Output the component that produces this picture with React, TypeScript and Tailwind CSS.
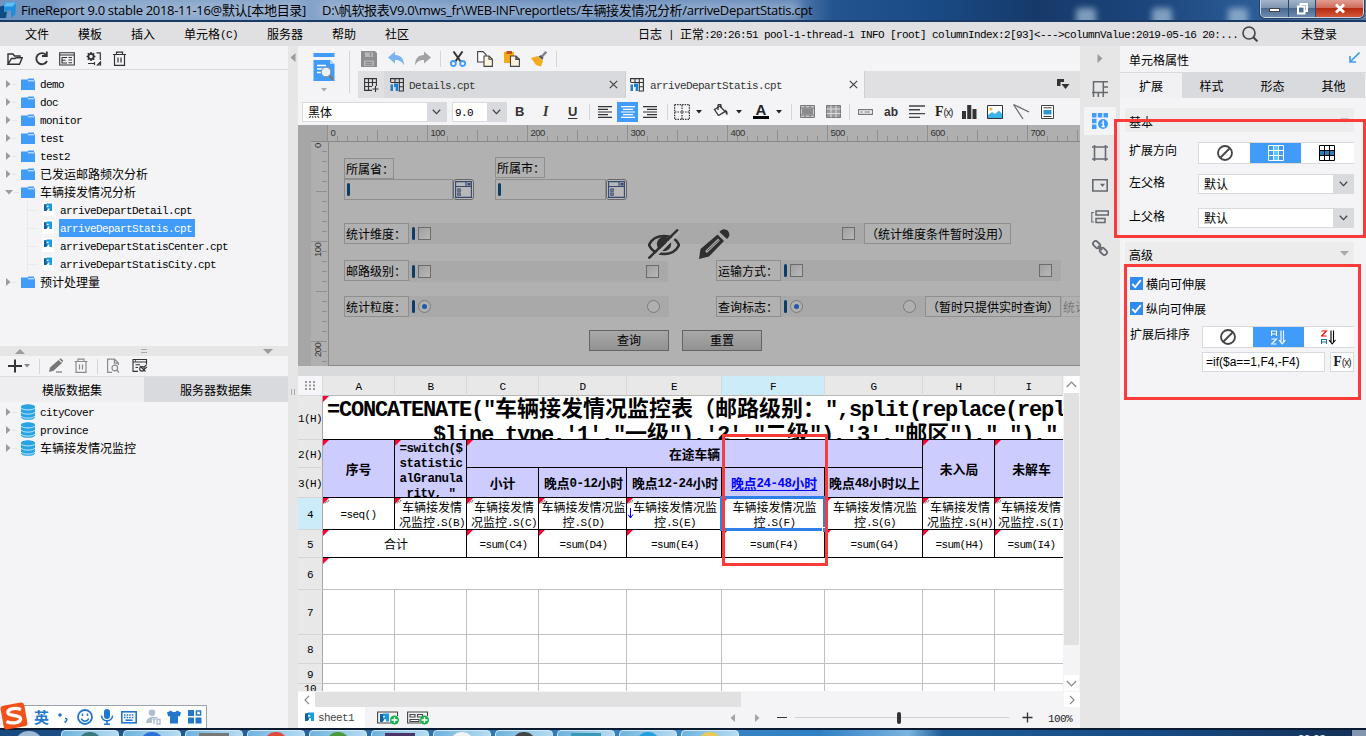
import React from "react";

const SANS = "font-['Liberation_Sans','Noto_Sans_CJK_SC',sans-serif]";

/* Mixed text: CJK glyphs are a full em wide, Latin ones half of that. */
function T({ s, size = "n" }: { s: string; size?: "n" | "b" | "h" }) {
  const latin =
    size === "n"
      ? "text-[11px] tracking-[-0.6px] align-[0.6px]"
      : size === "b"
        ? "text-[12.5px] font-bold tracking-[-0.5px] align-[0.6px]"
        : "text-[22px] font-bold tracking-[-1.2px]";
  const cjk =
    size === "n" ? "text-[12px]" : size === "b" ? "text-[12.8px] font-bold" : "text-[22px] font-bold";
  return (
    <span className={cjk + " whitespace-pre"}>
      {s.split(/([\u0020-\u00ff]+)/).map((p, i) =>
        i % 2 ? (
          <span key={i} className={latin + " font-['Liberation_Mono',monospace] leading-none"}>
            {p}
          </span>
        ) : (
          p
        )
      )}
    </span>
  );
}

type IcProps = { w?: number; h?: number; children: React.ReactNode; className?: string; c?: string; sw?: number };
function Ic({ w = 16, h = 16, children, className = "", c = "#333", sw = 1.4 }: IcProps) {
  return (
    <svg width={w} height={h} viewBox={`0 0 ${w} ${h}`} fill="none" stroke={c} strokeWidth={sw} className={"shrink-0 " + className}>
      {children}
    </svg>
  );
}

const Sep = ({ className = "" }) => <div className={"w-px shrink-0 bg-[#d5d5d8] " + className} />;

const Chevron = () => (
  <Ic w={9} h={6} c="#444" sw={1.3}>
    <path d="M0.8 0.8L4.5 4.6L8.2 0.8" />
  </Ic>
);

const Caret = ({ className = "", fill = "#222" }) => (
  <Ic w={6} h={4} c="none" className={className}>
    <path d="M0 0H6L3 3.6z" fill={fill} />
  </Ic>
);

/* ---------- title and menu ---------- */
function TitleBar() {
  return (
    <div className="relative flex h-[22px] shrink-0 items-center overflow-hidden border-b-2 border-[#1a3a66] bg-[linear-gradient(90deg,#6f93bf_0%,#7f9fc8_10%,#85a3c8_24%,#5f86b6_40%,#6a8dbb_52%,#5a80b0_58%,#23548f_61%,#1a4b86_68%,#16396a_76%,#1c467c_84%,#2c5c96_92%,#5f7fa8_100%)]">
      <div className="absolute left-[60px] top-[2px] h-4 w-[240px] bg-[#b4c6de] opacity-50 blur-[5px]" />
      <div className="absolute left-[320px] top-[2px] h-4 w-[480px] bg-[#a9bedb] opacity-60 blur-[5px]" />
      <div className="absolute left-[1076px] top-[8px] h-5 w-5 rounded bg-[#a8c4dc] opacity-70 blur-[3px]" />
      <div className="absolute left-[1152px] top-[8px] h-5 w-5 rounded bg-[#a8c4dc] opacity-70 blur-[3px]" />
      <div className="absolute left-[1228px] top-[8px] h-5 w-5 rounded bg-[#a8c4dc] opacity-70 blur-[3px]" />
      <Ic w={17} h={16} c="none" className="relative">
        <path d="M0 4.5L4 3.5V10L7 9.5L6 16H0z" fill="#0d4d86" />
        <path d="M4 3.5L6 0.5H16L15.5 12L11 16V8L4 10z" fill="#1f8fdc" />
        <path d="M6 0.5H16L12.5 4.5H4z" fill="#5cc0f2" />
      </Ic>
      <div className="relative ml-1 flex whitespace-pre font-['Open_Sans','Noto_Sans_CJK_SC',sans-serif] text-[13px] leading-[20px] text-black">
        <div className="w-[301px] tracking-[-0.3px]">FineReport 9.0 stable 2018-11-16@默认[本地目录]</div>
        <div className="tracking-[-0.3px]">D:\帆软报表V9.0\mws_fr\WEB-INF\reportlets/车辆接发情况分析/arriveDepartStatis.cpt</div>
      </div>
      <div className="absolute right-[2px] top-[-2px] flex h-[20px] w-[104px] overflow-hidden rounded-b-[5px] border border-[#c9d6e6] shadow-[0_0_0_1px_#27405f]">
        <div className="flex w-[28px] items-center justify-center border-r border-[#2c4769] bg-[linear-gradient(#a9b9cd_0%,#7d93b0_50%,#4a688e_51%,#6e8aae_100%)]">
          <div className="mt-1 h-[4px] w-[11px] border border-[#444] bg-white" />
        </div>
        <div className="flex w-[27px] items-center justify-center border-r border-[#2c4769] bg-[linear-gradient(#a9b9cd_0%,#7d93b0_50%,#4a688e_51%,#6e8aae_100%)]">
          <Ic w={13} h={13} c="#fff" sw={2}>
            <path d="M4.5 4V2H11V9H9" />
            <path d="M2 4.5H8.5V11.5H2z" />
          </Ic>
        </div>
        <div className="flex flex-1 items-center justify-center bg-[linear-gradient(#e3a397_0%,#cf6a58_50%,#b5290f_51%,#d4583c_100%)]">
          <Ic w={12} h={11} c="#fff" sw={2.8}>
            <path d="M2 1.5L10 9.5M10 1.5L2 9.5" />
          </Ic>
        </div>
      </div>
    </div>
  );
}

function MenuBar() {
  return (
    <div className="flex h-[24px] shrink-0 items-center bg-[#e0e0e2]">
      <div className="flex w-[638px] shrink-0 gap-[29px] pl-[25px]">
        {["文件", "模板", "插入", "单元格(C)", "服务器", "帮助", "社区"].map((m) => (
          <T key={m} s={m} />
        ))}
      </div>
      <div className="w-[604px] shrink-0">
        <T s={"日志 | 正常:20:26:51 pool-1-thread-1 INFO [root] columnIndex:2[93]<--->columnValue:2019-05-16 20:..."} />
      </div>
      <Ic w={16} h={16} sw={1.6} c="#444">
        <circle cx="7" cy="7" r="6" />
        <path d="M11.3 11.3L15.4 15.4" strokeWidth="2" />
      </Ic>
      <div className="ml-[43px]">
        <T s="未登录" />
      </div>
    </div>
  );
}

/* ---------- left column ---------- */
const Folder = () => (
  <Ic w={14} h={12} c="none">
    <path d="M0 1.5H6.5L7.5 0.5H13V2H14V12H0z" fill="#419bf9" />
    <path d="M7 2.8H13.5" stroke="#e8f2fd" strokeWidth="1" />
  </Ic>
);

const Db = () => (
  <Ic w={14} h={16} c="none">
    <path d="M0 3C0 -0.6 14 -0.6 14 3V13C14 16.8 0 16.8 0 13z" fill="#29a3e2" />
    <path d="M0 3.8C1 6.6 13 6.6 14 3.8M0 8C1 10.8 13 10.8 14 8M0 12C1 14.8 13 14.8 14 12" stroke="#d4edf9" strokeWidth="0.9" />
  </Ic>
);

const CptLogo = ({ w = 9, h = 9 }) => (
  <svg width={w} height={h} viewBox="0 0 9 9" className="shrink-0">
    <path d="M0 1.5L3 1V5.5H4V7.5L2.5 9H0z" fill="#0f62a6" />
    <path d="M3 0.5H9V9H6V6.2H3.5L3 4.4H5.2V3H3z" fill="#1a9ce2" />
  </svg>
);

function Branch({ name, open, icon }: { name: string; open?: boolean; icon: React.ReactNode }) {
  return (
    <div className="flex h-[18px] items-center">
      <div className="flex w-[21px] items-center pl-[5px]">
        {open ? (
          <Ic w={8} h={5} c="none">
            <path d="M0 0H8L4 4.5z" fill="#9b9b9b" />
          </Ic>
        ) : (
          <Ic w={6} h={8} c="none">
            <path d="M1 0V8L5.5 4z" fill="#9b9b9b" />
          </Ic>
        )}
        <div className="ml-px h-px w-[5px] bg-[#e6e6e8]" />
      </div>
      <div className="flex w-[19px]">{icon}</div>
      <div className="leading-[18px]">
        <T s={name} />
      </div>
    </div>
  );
}

function Leaf({ name, active }: { name: string; active?: boolean }) {
  return (
    <div className="flex h-[18px] items-center">
      <div className="ml-[27px] h-[18px] w-px bg-[#eaeaec]" />
      <div className="mr-[4px] h-px w-[10px] bg-[#eaeaec]" />
      <div className="mb-[2px] flex h-[14px] w-[12px] items-start justify-center bg-white pt-px">
        <CptLogo w={8} h={8} />
      </div>
      <div className={active ? "ml-[5px] flex h-[18px] items-center bg-[#419bf9] pl-px pr-[3px] text-white" : "ml-[6px]"}>
        <T s={name} />
      </div>
    </div>
  );
}

function LeftColumn() {
  return (
    <div className="flex w-[288px] shrink-0 flex-col bg-[#f4f4f6]">
      <div className="flex h-[24px] shrink-0 items-center border-b border-[#d9d9dc] pl-[7px] pt-[3px]">
        <Ic>
          <path d="M1 13V3H6L7.5 5H13V7.5M1 13.2L4.5 7.5H8L9 6.8H15.2L12.5 13.2z" />
        </Ic>
        <Ic className="ml-[11px]" sw={1.8}>
          <path d="M12 3.8A5.6 5.6 0 1 0 13 10" />
          <path d="M12.8 0.5V5H8" />
        </Ic>
        <Ic className="ml-[9px]">
          <path d="M0.7 1.7H15.3V14H0.7zM0.7 4H15.3M3 6.5H8M3 6.5V12H8M3 9.2H6.5M9.5 6.5H13M9.5 9H13M9.5 11.8H13" strokeWidth="1.1" />
        </Ic>
        <Ic className="ml-[11px]">
          <circle cx="5" cy="5.5" r="2.6" strokeWidth="1.8" />
          <path d="M5 1V3M5 8V10M0.6 5.5H2.5M7.6 5.5H9.4M1.8 2.3L3.2 3.7M6.9 7.3L8.2 8.7M8.2 2.3L6.9 3.7M3.2 7.3L1.8 8.7" strokeWidth="1.6" />
          <path d="M10.5 1.8H14.3V9M2 12.5H8.5M8.5 11V14M11.5 14H14.5V11zM14.5 11L11.5 14" strokeWidth="1.2" />
        </Ic>
        <Ic className="ml-[9px]">
          <path d="M2 3.5H15M5.5 3.3V1.2H11.5V3.3M3.5 3.5V14.3H13.5V3.5M7 6.5V11.5M10 6.5V11.5" strokeWidth="1.2" />
        </Ic>
      </div>
      <div className="h-[276px] shrink-0 pt-[5px]">
        {["demo", "doc", "monitor", "test", "test2", "已发运邮路频次分析"].map((n) => (
          <Branch key={n} name={n} icon={<Folder />} />
        ))}
        <Branch name="车辆接发情况分析" open icon={<Folder />} />
        <Leaf name="arriveDepartDetail.cpt" />
        <Leaf name="arriveDepartStatis.cpt" active />
        <Leaf name="arriveDepartStatisCenter.cpt" />
        <Leaf name="arriveDepartStatisCity.cpt" />
        <Branch name="预计处理量" icon={<Folder />} />
      </div>
      <div className="flex h-[10px] shrink-0 items-center justify-between bg-[#e6e6e6] pl-[15px] pr-[15px]">
        <Ic w={10} h={5} c="none">
          <path d="M0 5H10L5 0z" fill="#9b9b9b" />
        </Ic>
        <div className="h-[4px] w-[6px] border-y border-[#aaa]" />
        <Ic w={10} h={5} c="none">
          <path d="M0 0H10L5 5z" fill="#9b9b9b" />
        </Ic>
      </div>
      <div className="flex h-[21px] shrink-0 items-center border-b border-[#dedee0] pl-[7px]">
        <Ic sw={2}>
          <path d="M8 1.5V14.5M1 8H15" />
        </Ic>
        <Caret className="ml-px" fill="#888" />
        <Sep className="ml-[9px] h-[15px]" />
        <Ic className="ml-[8px]" c="none">
          <path d="M1 14L2 9.5L10.5 2L14 5L5.5 12.8zM11.3 1.3L12.6 0.2L15.3 2.8L14.6 4.3z" fill="#777" />
          <path d="M8 14H14" stroke="#888" />
        </Ic>
        <Ic className="ml-[9px]" c="#8a8a8a" sw={1.2}>
          <path d="M1.5 3.5H14.5M5 3.3V1.2H11V3.3M3 3.5V14.3H13V3.5M6.5 6.5V11.5M9.5 6.5V11.5" />
        </Ic>
        <Sep className="ml-[8px] h-[15px]" />
        <Ic className="ml-[8px]" c="#8a8a8a" sw={1.2}>
          <path d="M6 14.4H1.6V1.2H8.5L12.4 5V7M8.4 1.2V5.2H12.4" />
          <circle cx="8.8" cy="10" r="2.8" />
          <path d="M11 12.2L13 14.5" />
        </Ic>
        <Ic className="ml-[10px]" sw={1.1}>
          <path d="M6 13.4H1V1.5H14.5V6.5M1 4H14.5M3 2.8H4M3.5 6.8H8M3.5 9.5H6" />
          <circle cx="10" cy="10.8" r="2.3" />
          <path d="M8.2 8L13.5 13.5M12 9L14.5 6.8M12.5 11L15 8.8" />
        </Ic>
      </div>
      <div className="flex h-[25px] shrink-0 text-center leading-[25px]">
        <div className="flex-1 bg-[#eeeef0]">
          <T s="模版数据集" />
        </div>
        <div className="flex-1 bg-[#d9dadd]">
          <T s="服务器数据集" />
        </div>
      </div>
      <div className="pt-[1px]">
        {["cityCover", "province", "车辆接发情况监控"].map((n) => (
          <Branch key={n} name={n} icon={<Db />} />
        ))}
      </div>
    </div>
  );
}

/* ---------- centre toolbars ---------- */
function PreviewButton() {
  return (
    <div className="flex w-[60px] shrink-0 items-center">
      <div className="flex w-[51px] flex-col items-center">
        <Ic w={22} h={29} c="none">
          <path d="M0.5 0H21.5V4H0.5z" fill="#419bf9" />
          <path d="M0.5 7H17L21.5 11V28H0.5z" fill="#419bf9" />
          <path d="M17 7V11H21.5z" fill="#a9d1fc" />
          <path d="M4 12.5H13M4 16H9M4 19.5H8" stroke="#fff" strokeWidth="1.4" />
          <path d="M16 22.5L20 26.5" stroke="#777" strokeWidth="2.4" />
          <circle cx="13" cy="19" r="4.8" fill="#e9f3fe" stroke="#8a8f96" strokeWidth="1" />
        </Ic>
        <Caret className="mt-[6px]" fill="#aaa" />
      </div>
      <Sep className="h-[42px]" />
    </div>
  );
}

function QuickBar() {
  return (
    <div className="flex h-[25px] shrink-0 items-center gap-[11px] pl-[3px]">
      <Ic c="none">
        <path d="M0 0H14L16 2V16H0z" fill="#8d8d8f" />
        <path d="M4 1.5H12V6H4zM3 9.5H13V15H3z" fill="#b8b8ba" />
        <path d="M9.5 2V5.5M4.5 11.5H11.5M4.5 13.5H11.5" stroke="#8d8d8f" />
      </Ic>
      <Ic c="none">
        <path d="M0 6.5L7 0.5V4C13 4 16 8 16 14.5C14 10.5 11.5 9 7 9V12.5z" fill="#7ab3ef" />
      </Ic>
      <Ic c="none">
        <path d="M16 6.5L9 0.5V4C3 4 0 8 0 14.5C2 10.5 4.5 9 9 9V12.5z" fill="#a2a2a4" />
      </Ic>
      <div className="-mx-[2px] flex">
        <Sep className="h-[16px]" />
      </div>
      <Ic>
        <path d="M3.5 0.5L11 11M12.5 0.5L5 11" strokeWidth="2" />
        <circle cx="3.3" cy="12.5" r="2.5" stroke="#419bf9" strokeWidth="1.8" />
        <circle cx="12.7" cy="12.5" r="2.5" stroke="#419bf9" strokeWidth="1.8" />
      </Ic>
      <Ic c="#444" sw={1.1}>
        <path d="M0.6 0.6H6L9 3.5V11H0.6z" fill="#fff" />
        <path d="M7 5H12L15.4 8.3V15.4H7z" fill="#fdf5e0" />
        <path d="M12 5V8.3H15.4" />
      </Ic>
      <Ic c="none">
        <path d="M0 1H10V12H0z" fill="#f3ab1c" />
        <path d="M2.5 0H8V3H2.5z" fill="#c8501c" />
        <path d="M6.5 5H12L15.4 8.3V15.4H6.5z" fill="#fdf5e0" stroke="#444" strokeWidth="1.1" />
        <path d="M12 5V8.3H15.4" stroke="#444" />
      </Ic>
      <Ic c="none">
        <path d="M0 7L7 5L12 10L10 15.5L5 14z" fill="#f5ac1a" />
        <path d="M7.5 5.5L10 4L12.5 6.5L11.5 9z" fill="#555b66" />
        <path d="M11 5.5L15.3 0.8" stroke="#7b8494" strokeWidth="2.4" />
      </Ic>
      <div className="-ml-[2px] flex">
        <Sep className="h-[16px]" />
      </div>
    </div>
  );
}

const CptTabIcon = () => (
  <Ic w={14} h={14} c="#333" sw={1.1}>
    <path d="M0.6 4V0.6H13.4V13H8.5M0.6 4.5H13.4M5 0.6V4.5M9.3 0.6V13M9.3 8.7H13.4" />
    <path d="M0.5 6.5H3V13H0.5zM4 5.5H8V13H5.7V9H4z" fill="#1a7fd0" stroke="none" />
  </Ic>
);

const Cross = () => (
  <Ic w={9} h={9} c="#444" sw={1.2}>
    <path d="M0.8 0.8L8.2 8.2M8.2 0.8L0.8 8.2" />
  </Ic>
);

function FileTabs() {
  return (
    <div className="flex h-[27px] shrink-0 bg-[#e0e0e2]">
      <div className="flex w-[26px] items-center pl-[6px]">
        <Ic w={15} h={14} sw={1.1}>
          <path d="M8 12.4H0.6V0.6H12.4V8M0.6 4.5H12.4M0.6 8.5H8M4.5 0.6V12.4M8.5 0.6V8M11.5 8V14M8.5 11H14.5" />
        </Ic>
      </div>
      <div className="flex w-[241px] items-center bg-[#d9dadd] pl-[6px] pr-[7px] text-[#333]">
        <CptTabIcon />
        <div className="ml-[5px] flex-1">
          <T s="Details.cpt" />
        </div>
        <Cross />
      </div>
      <div className="flex w-[240px] items-center border-x border-[#cfcfd2] bg-[#f4f4f6] pl-[4px] pr-[6px] text-[#333]">
        <CptTabIcon />
        <div className="ml-[6px] flex-1">
          <T s="arriveDepartStatis.cpt" />
        </div>
        <Cross />
      </div>
      <div className="flex flex-1 items-center justify-end pr-[10px]">
        <Ic w={13} h={11} c="none">
          <path d="M0 0H7V3H3.5V7H0z" fill="#333" />
          <path d="M4.5 5H12.5L8.5 10z" fill="#333" />
        </Ic>
      </div>
    </div>
  );
}

const Lines = ({ d, c = "#333" }: { d: string; c?: string }) => (
  <Ic w={16} h={12} c={c} sw={1.2}>
    <path d={d} />
  </Ic>
);

function Fx({ className = "" }) {
  return (
    <span className={"whitespace-nowrap font-['Liberation_Serif',serif] text-[14px] leading-none text-[#222] " + className}>
      <b>F</b>
      <span className="font-['Liberation_Sans',sans-serif] text-[10px] tracking-[-0.9px]">(x)</span>
    </span>
  );
}

function FormatBar() {
  return (
    <div className="flex h-[27px] shrink-0 items-center bg-[#f4f4f6] pl-[4px]">
      <div className="flex h-[20px] w-[145px] shrink-0 items-center border border-[#d9dadd] bg-white">
        <div className="flex-1 pl-[5px] leading-[18px]">
          <T s="黑体" />
        </div>
        <div className="flex h-[18px] w-[19px] items-center justify-center bg-[#d9dadd]">
          <Chevron />
        </div>
      </div>
      <div className="ml-[5px] flex h-[20px] w-[55px] shrink-0 items-center border border-[#d9dadd] bg-white">
        <div className="flex-1 pl-[2px] leading-[18px]">
          <T s="9.0" />
        </div>
        <div className="flex h-[18px] w-[19px] items-center justify-center bg-[#d9dadd]">
          <Chevron />
        </div>
      </div>
      <div className={"flex shrink-0 text-[13px] leading-none text-[#333] " + SANS}>
        <b className="ml-[8px] w-[27px]">B</b>
        <i className="w-[26px] pl-[1px] font-['Liberation_Serif',serif] text-[14px] font-bold leading-[13px]">I</i>
        <b className="w-[21px] underline underline-offset-2">U</b>
      </div>
      <Sep className="h-[16px]" />
      <div className="ml-[8px] flex">
        <Lines d="M0 0.6H14M0 3.3H10M0 6H14M0 8.7H10M0 11.4H14" />
      </div>
      <div className="ml-[3px] flex h-[20px] w-[21px] shrink-0 items-center justify-center bg-[#419bf9]">
        <Lines c="#fff" d="M1 0.6H15M3 3.3H13M1 6H15M3 8.7H13M1 11.4H15" />
      </div>
      <div className="ml-[4px] flex">
        <Lines d="M1 0.6H15M5 3.3H15M1 6H15M5 8.7H15M1 11.4H15" />
      </div>
      <Sep className="ml-[9px] h-[16px]" />
      <Ic w={16} h={16} className="ml-[6px]" sw={1.2}>
        <path d="M0.6 0.6H15.4V15.4H0.6zM8 1V15M1 8H15" strokeDasharray="1.5 1" />
      </Ic>
      <Caret className="ml-[6px]" />
      <div className="ml-[11px] flex w-[16px] shrink-0 flex-col">
        <Ic w={16} h={12} sw={1.3}>
          <path d="M1.5 5.5L7 2L12 7.5L5.5 11.5z" />
          <path d="M5 6V1.5C5 0 8 0 8 1.5V4" />
          <path d="M12 5.5C15 7 14.5 9 14.5 11C13 10.5 12.2 9 12 5.5z" fill="#333" stroke="none" />
        </Ic>
        <div className="h-[4px] bg-white" />
      </div>
      <Caret className="ml-[7px]" />
      <div className={"ml-[11px] flex w-[16px] shrink-0 flex-col items-center text-[15px] font-bold leading-[12px] text-[#222] " + SANS}>
        A
        <div className="h-[3px] w-[16px] bg-black" />
      </div>
      <Caret className="ml-[7px]" />
      <Sep className="ml-[9px] h-[16px]" />
      <Ic w={15} h={13} className="ml-[8px]" c="#777" sw={1}>
        <path d="M0.5 0.5H14.5V12.5H0.5z" fill="#c9c9cb" />
        <path d="M0.5 3H14.5M0.5 10H14.5M5 0.5V3M10 0.5V3M5 10V12.5M10 10V12.5" />
        <path d="M2 3.5H13V9.5H2z" fill="#8a8a8c" stroke="none" />
      </Ic>
      <Ic w={15} h={13} className="ml-[11px]" c="#777" sw={1}>
        <path d="M0.5 0.5H14.5V12.5H0.5z" fill="#9b9b9d" />
        <path d="M0.5 4H14.5M0.5 8.5H14.5M5 0.5V12.5M10 0.5V12.5" stroke="#dcdcde" />
      </Ic>
      <Sep className="ml-[8px] h-[16px]" />
      <Ic w={15} h={6} className="ml-[8px]" c="#777" sw={1.1}>
        <path d="M0.6 0.6H14.4V5.4H0.6zM2.5 3H5M6.5 3H12" />
      </Ic>
      <b className={"ml-[11px] w-[25px] shrink-0 text-[12px] leading-none text-[#333] " + SANS}>ab</b>
      <Ic w={16} h={14} c="#444" sw={1.4}>
        <path d="M0 1H16M0 4.8H11M0 8.6H16M0 12.4H11" />
      </Ic>
      <Fx className="ml-[10px] w-[27px] shrink-0" />
      <Ic w={15} h={14} c="none">
        <path d="M0 6H4V14H0zM5.2 0H9.3V14H5.2zM10.5 4H14.5V14H10.5z" fill="#333" />
      </Ic>
      <Ic w={16} h={14} className="ml-[10px]" c="#333" sw={1}>
        <path d="M0.5 0.5H15.5V13.5H0.5z" fill="#fff" />
        <path d="M1 13V10L5 7L8 9L12 5.5L15 9V13z" fill="#3db3ec" stroke="none" />
        <circle cx="4" cy="4" r="1.6" fill="#f8b62c" stroke="none" />
      </Ic>
      <Ic w={17} h={16} className="ml-[10px]" c="#666" sw={1.2}>
        <path d="M0.5 0.5L16 8M0.5 0.5L10 15" />
      </Ic>
      <Ic w={13} h={14} className="ml-[11px]" c="#444" sw={1}>
        <path d="M0.5 0.5H12.5V13.5H0.5z" fill="#fff" />
        <path d="M2.5 2.8H10.5M2.5 11.5H10.5" />
        <path d="M2.5 5H10.5V9.5H2.5z" fill="#2c95d8" stroke="none" />
      </Ic>
    </div>
  );
}

/* ---------- parameter pane ---------- */
const range = (n: number) => Array.from({ length: n }, (_, i) => i);

function ParamPane() {
  return (
    <div className="flex h-[241px] shrink-0 flex-col bg-[#a6a6a6]">
      <svg width="782" height="17" className="shrink-0 font-['Liberation_Sans',sans-serif]">
        <rect x="30" width="752" height="17" fill="#afafaf" />
        {range(76).map((i) => (
          <path key={i} d={`M${29.5 + i * 10} ${i % 10 === 0 ? 0 : i % 5 === 0 ? 5 : 11}V16`} stroke="#8f8f8f" />
        ))}
        {range(8).map((i) => (
          <text key={i} x={32.5 + i * 100} y={10.5} fontSize="9.5" letterSpacing="-0.5" fill="#333">
            {i * 100}
          </text>
        ))}
        <path d="M13 16.5H782" stroke="#888" />
      </svg>
      <div className="flex flex-1">
        <svg width="30" height="224" className="shrink-0 font-['Liberation_Sans',sans-serif]">
          <rect x="13" width="17" height="224" fill="#afafaf" />
          {range(23).map((i) => (
            <path key={i} d={`M${i % 10 === 0 ? 13 : i % 5 === 0 ? 18 : 24} ${i * 10 - 0.5}H29`} stroke="#8f8f8f" />
          ))}
          <text transform="translate(22.5 6) rotate(-90)" fontSize="9.5" letterSpacing="-0.5" fill="#333">0</text>
          <text transform="translate(22.5 115) rotate(-90)" fontSize="9.5" letterSpacing="-0.5" fill="#333">100</text>
          <text transform="translate(22.5 215) rotate(-90)" fontSize="9.5" letterSpacing="-0.5" fill="#333">200</text>
        </svg>
        <FormCanvas />
      </div>
    </div>
  );
}

const at = (x: number, y: number, w: number, h: number) => ({ left: x - 329, top: y - 142, width: w, height: h });

const Label = ({ x, y, w, s, faint }: { x: number; y: number; w: number; s: string; faint?: boolean }) => (
  <div
    className={
      "absolute flex items-center overflow-hidden border pl-px leading-[18px] " +
      (faint ? "border-[#a3a3a3] text-[#777]" : "border-[#8e8e8e] bg-[#b1b1b1]")
    }
    style={at(x, y, w, 21)}
  >
    <T s={s} />
  </div>
);
const Strip = ({ x, y, w }: { x: number; y: number; w: number }) => (
  <div className="absolute bg-[#a9a9a9]" style={at(x, y, w, 21)} />
);
const Mark = ({ x, y }: { x: number; y: number }) => (
  <div className="absolute rounded-sm bg-[#0d3c66]" style={at(x, y, 3, 13)} />
);
const Check = ({ x, y }: { x: number; y: number }) => (
  <div className="absolute border border-[#6c6c6c] bg-[linear-gradient(135deg,#a0a0a0,#b8b8b8)]" style={at(x, y, 13, 13)} />
);
const Radio = ({ x, y, on }: { x: number; y: number; on?: boolean }) => (
  <div className="absolute flex items-center justify-center rounded-full border border-[#7b7b7b] bg-[#b0b0b0]" style={at(x, y, 13, 13)}>
    {on && <div className="h-[5px] w-[5px] rounded-full bg-[#2459a6]" />}
  </div>
);
const Btn = ({ x, s }: { x: number; s: string }) => (
  <div
    className="absolute border border-[#646464] bg-[linear-gradient(#a8a8a8,#929292)] text-center leading-[18px]"
    style={at(x, 330, 80, 21)}
  >
    <T s={s} />
  </div>
);
const Combo = ({ x, w }: { x: number; w: number }) => (
  <div className="absolute flex" style={at(x, 179, w, 21)}>
    <div className="flex flex-1 items-center border border-[#8e8e8e] pl-[2px]">
      <div className="h-[13px] w-[3px] rounded-sm bg-[#0d3c66]" />
    </div>
    <div className="flex w-[21px] items-center justify-center rounded-[3px] border border-[#666] bg-[#b8b8b8]">
      <Ic w={17} h={17} c="#33486f" sw={1.1}>
        <path d="M0.6 0.6H16.4V16.4H0.6zM0.6 5.5H16.4M11 0.6V5.5M2.8 8H5.2V10.3H2.8zM2.8 12H5.2V14.3H2.8z" />
        <path d="M13 2.5H15V4H13z" fill="#33486f" />
      </Ic>
    </div>
  </div>
);

function FormCanvas() {
  return (
    <div className="relative flex-1 overflow-hidden border-b border-l border-[#8a8a8a] bg-[#b1b1b1]">
      <Label x={344} y={158} w={50} s="所属省：" />
      <Label x={495} y={157} w={50} s="所属市：" />
      <Combo x={344} w={130} />
      <Combo x={495} w={132} />
      <Strip x={409} y={223} w={455} />
      <Label x={344} y={223} w={65} s="统计维度：" />
      <Mark x={412} y={227} />
      <Check x={418} y={227} />
      <Check x={842} y={227} />
      <Label x={864} y={223} w={147} s="（统计维度条件暂时没用）" />
      <Strip x={409} y={261} w={259} />
      <Label x={344} y={260} w={65} s="邮路级别：" />
      <Mark x={412} y={265} />
      <Check x={418} y={265} />
      <Check x={646} y={265} />
      <Strip x={781} y={260} w={280} />
      <Label x={716} y={260} w={65} s="运输方式：" />
      <Mark x={784} y={264} />
      <Check x={790} y={264} />
      <Check x={1039} y={264} />
      <Strip x={409} y={296} w={260} />
      <Label x={344} y={296} w={65} s="统计粒度：" />
      <Mark x={412} y={300} />
      <Radio x={418} y={300} on />
      <Radio x={647} y={300} />
      <Strip x={781} y={296} w={144} />
      <Label x={716} y={296} w={65} s="查询标志：" />
      <Mark x={784} y={300} />
      <Radio x={790} y={300} on />
      <Radio x={903} y={300} />
      <Label x={925} y={296} w={136} s="（暂时只提供实时查询）" />
      <Label x={1061} y={296} w={40} s="统计" faint />
      <Btn x={589} s="查询" />
      <Btn x={682} s="重置" />
      <svg className="absolute" style={at(648, 229, 32, 30)} viewBox="0 0 32 30" fill="none">
        <path d="M1 16C6 4 26 4 31 16C26 28 6 28 1 16z" stroke="#2f2f2f" strokeWidth="2.6" />
        <circle cx="16" cy="15" r="7.2" fill="#2f2f2f" />
        <path d="M18 12C19 12 20 13 20 15" stroke="#b1b1b1" strokeWidth="1.5" />
        <path d="M2.5 31.5L32.5 2" stroke="#b1b1b1" strokeWidth="3" />
        <path d="M0.5 29.5L30 0.5" stroke="#2f2f2f" strokeWidth="2.4" />
      </svg>
      <svg className="absolute" style={at(699, 229, 31, 31)} viewBox="0 0 31 31" fill="none">
        <path d="M0 30L1.5 20L18.5 5.5L25 12L10 27.5z" fill="#2f2f2f" />
        <path d="M7 23L20 10.5" stroke="#b1b1b1" strokeWidth="2.6" />
        <path d="M8 22L20 10.8" stroke="#2f2f2f" strokeWidth="0.7" />
        <path d="M20.5 3C23 -1 27 0 29 2C31 4.5 31 7.5 28 10z" fill="#2f2f2f" />
      </svg>
    </div>
  );
}

/* ---------- report grid ---------- */
const Tri = ({ grey }: { grey?: boolean }) => (
  <svg width="7" height="7" className="absolute left-0 top-0">
    <path d="M0 0H6L0 6z" fill="#ff0033" />
    {grey && <path d="M2 5.5L4 2.5M4.5 4.5L6 2" stroke="#777" strokeWidth="1" />}
  </svg>
);

type CellProps = { pos: string; lines: string[]; bold?: boolean; tri?: boolean; grey?: boolean; cls?: string; children?: React.ReactNode };
function Cell({ pos, lines, bold, tri, grey, cls = "", children }: CellProps) {
  return (
    <div
      className={
        "relative flex flex-col items-center justify-center border-b border-r border-black text-center leading-[15px] " +
        (bold ? "bg-[#ccccff] " : "bg-white ") + pos + " " + cls
      }
    >
      {tri && <Tri grey={grey} />}
      {lines.map((l) => (
        <div key={l} className="h-[15px] whitespace-nowrap">
          <T s={l} size={bold ? "b" : "n"} />
        </div>
      ))}
      {children}
    </div>
  );
}

const COLS = ["A", "B", "C", "D", "E", "F", "G", "H", "I"];
const ROWS = ["1(H)", "2(H)", "3(H)", "4", "5", "6", "7", "8", "9", "10"];
const COL_START = ["col-start-2", "col-start-3", "col-start-4", "col-start-5", "col-start-6", "col-start-7", "col-start-8", "col-start-9", "col-start-10"];

function Sheet() {
  return (
    <div className="grid h-[315px] w-[765px] shrink-0 grid-cols-[25px_72px_72px_72px_88px_95px_103px_98px_72px_68px] grid-rows-[20px_44px_28px_30px_32px_28px_32px_45px_29px_20px_8px] overflow-hidden bg-white">
      <div className="col-start-1 row-start-1 flex items-center justify-center border-b border-r border-[#d9dadd] bg-[#f6f6fa]">
        <Ic w={11} h={9} c="none">
          {range(9).map((i) => (
            <rect key={i} x={(i % 3) * 4} y={Math.floor(i / 3) * 3.5} width="2" height="2" fill="#999" />
          ))}
        </Ic>
      </div>
      {COLS.map((c, i) => (
        <div
          key={c}
          className={
            "row-start-1 border-b border-r border-b-[#b8b8b8] border-r-[#d9dadd] text-center leading-[19px] " +
            COL_START[i] + (c === "F" ? " bg-[#ccecfa]" : " bg-[#e8e8e8]")
          }
        >
          <T s={c} />
        </div>
      ))}
      {ROWS.map((r) => (
        <div
          key={r}
          className={
            "col-start-1 flex items-center justify-center overflow-hidden border-b border-r border-b-[#d5d5d7] border-r-[#a8a8a8] " +
            (r === "4" ? "bg-[#ccecfa]" : "bg-[#e8e8e8]")
          }
        >
          <T s={r} />
        </div>
      ))}

      <div className="relative col-span-9 col-start-2 row-start-2 overflow-hidden border-b border-black leading-[25px]">
        <Tri />
        <div className="-mt-[2px] h-[25px] whitespace-nowrap pl-[4px]">
          <T size="h" s={'=CONCATENATE("车辆接发情况监控表（邮路级别：",split(replace(repl'} />
        </div>
        <div className="h-[25px] whitespace-nowrap pl-[110px]">
          <T size="h" s={'$line_type,\'1\',"一级"),\'2\',"二级"),\'3\',"邮区")," ")," ")'} />
        </div>
      </div>

      <Cell pos="col-start-2 row-start-3 row-span-2" lines={["序号"]} bold tri />
      <Cell
        pos="col-start-3 row-start-3 row-span-2"
        cls="!justify-start overflow-hidden pl-px"
        lines={["=switch($", "statistic", "alGranula", 'rity, "']}
        bold
        tri
      />
      <Cell pos="col-start-4 col-span-5 row-start-3" lines={["在途车辆"]} bold tri />
      <Cell pos="col-start-4 row-start-4" lines={["小计"]} bold />
      <Cell pos="col-start-5 row-start-4" cls="pl-[2px]" lines={["晚点0-12小时"]} bold />
      <Cell pos="col-start-6 row-start-4" cls="pl-[2px]" lines={["晚点12-24小时"]} bold />
      <Cell pos="col-start-7 row-start-4" cls="pl-[2px] text-[#0000ff] underline underline-offset-2" lines={["晚点24-48小时"]} bold />
      <Cell pos="col-start-8 row-start-4" cls="pl-[2px]" lines={["晚点48小时以上"]} bold />
      <Cell pos="col-start-9 row-start-3 row-span-2" cls="pl-px" lines={["未入局"]} bold tri />
      <Cell pos="col-start-10 row-start-3 row-span-2" cls="border-r-0 pl-[5px]" lines={["未解车"]} bold tri />

      <Cell pos="col-start-2 row-start-5" lines={["=seq()"]} tri grey />
      <Cell pos="col-start-3 row-start-5" cls="pl-[3px]" lines={["车辆接发情", "况监控.S(B)"]} tri grey />
      <Cell pos="col-start-4 row-start-5" cls="pl-[3px]" lines={["车辆接发情", "况监控.S(C)"]} tri grey />
      <Cell pos="col-start-5 row-start-5" cls="pl-[2px]" lines={["车辆接发情况监", "控.S(D)"]} tri grey />
      <Cell pos="col-start-6 row-start-5" cls="pl-[2px]" lines={["车辆接发情况监", "控.S(E)"]} tri grey>
        <svg width="6" height="12" className="absolute left-[1px] top-[10px]">
          <path d="M2.5 0V10M0 6.5L2.5 10L5 6.5" stroke="#0000ff" fill="none" />
        </svg>
      </Cell>
      <Cell pos="col-start-7 row-start-5" cls="pl-[3px]" lines={["车辆接发情况监", "控.S(F)"]} tri>
        <div className="absolute -bottom-[2px] -left-[2px] -right-[2px] -top-[2px] z-10 border-[3px] border-[#2e7fe8]">
          <div className="absolute -bottom-[4px] -right-[4px] h-[5px] w-[5px] border-l border-t border-white bg-[#2e7fe8]" />
        </div>
      </Cell>
      <Cell pos="col-start-8 row-start-5" cls="pl-[3px]" lines={["车辆接发情况监", "控.S(G)"]} tri />
      <Cell pos="col-start-9 row-start-5" cls="pl-[3px]" lines={["车辆接发情", "况监控.S(H)"]} tri grey />
      <Cell pos="col-start-10 row-start-5" cls="border-r-0 pl-[4px]" lines={["车辆接发情", "况监控.S(I)"]} tri grey />

      <Cell pos="col-start-2 col-span-2 row-start-6" cls="pl-[3px]" lines={["合计"]} tri />
      {["C4", "D4", "E4", "F4", "G4", "H4", "I4"].map((c, i) => (
        <Cell key={c} pos={"row-start-6 " + COL_START[i + 2]} cls={c === "I4" ? "border-r-0 pl-[5px]" : "pl-[2px]"} lines={[`=sum(${c})`]} tri />
      ))}

      <div className="relative col-span-9 col-start-2 row-start-7 border-b border-[#c0c0c0]">
        <Tri />
      </div>
      {range(4).map((r) =>
        COLS.map((c, i) => (
          <div
            key={c + r}
            className={
              "border-b border-[#c0c0c0] " + (c === "I" ? "" : "border-r ") + COL_START[i] + " " +
              ["row-start-8", "row-start-9", "row-start-10", "row-start-11 border-b-0"][r]
            }
          />
        ))
      )}
      <div className="pointer-events-none relative col-start-7 row-start-3">
        <div className="absolute left-0 top-[-6px] z-20 h-[132px] w-[106px] border-[3px] border-[#f93c3a]" />
      </div>
    </div>
  );
}

function Center() {
  return (
    <div className="flex w-[782px] shrink-0 flex-col bg-[#f4f4f6]">
      <div className="flex h-[52px] shrink-0">
        <PreviewButton />
        <div className="flex flex-1 flex-col">
          <QuickBar />
          <FileTabs />
        </div>
      </div>
      <FormatBar />
      <ParamPane />
      <div className="h-[10px] shrink-0 bg-[#d9dadc]" />
      <div className="flex h-[315px] shrink-0">
        <Sheet />
        <div className="flex flex-1 flex-col pl-px pr-px">
          <div className="flex h-[17px] items-center justify-center bg-white">
            <Ic w={11} h={7} c="#888" sw={1.2}>
              <path d="M0.8 6L5.5 1.2L10.2 6" />
            </Ic>
          </div>
          <div className="h-[252px] bg-[#e1e1e1]" />
          <div className="flex-1" />
          <div className="flex h-[16px] items-center justify-center bg-white">
            <Ic w={11} h={7} c="#888" sw={1.2}>
              <path d="M0.8 1L5.5 5.8L10.2 1" />
            </Ic>
          </div>
        </div>
      </div>
      <div className="flex h-[16px] shrink-0 pt-px">
        <div className="flex w-[17px] items-center justify-center bg-white">
          <Ic w={6} h={10} c="#888" sw={1.2}>
            <path d="M5 0.8L1 5L5 9.2" />
          </Ic>
        </div>
        <div className="w-[426px] bg-[#e1e1e1]" />
        <div className="flex-1" />
        <div className="flex w-[16px] items-center justify-center bg-white">
          <Ic w={6} h={10} c="#888" sw={1.2}>
            <path d="M1 0.8L5 5L1 9.2" />
          </Ic>
        </div>
      </div>
      <div className="flex flex-1 items-center">
        <div className="flex h-full w-[67px] items-center bg-white pb-[2px] pl-[7px] text-[#444]">
          <CptLogo w={9} h={9} />
          <div className="ml-[4px]">
            <T s="sheet1" />
          </div>
        </div>
        {[0, 1].map((k) => (
          <Ic key={k} w={23} h={14} c="#444" sw={1.1} className={k ? "ml-[7px]" : "ml-[12px]"}>
            <path d="M14 12H0.6V1H20.5V5" />
            {k ? (
              <path d="M3 3.5H8V6H3zM10.5 3.5H15.5V6H10.5zM3 8.5H12V10.5H3z" />
            ) : (
              <g stroke="none">
                <path d="M3 3H6V7.5H7V9L5.5 11H3z" fill="#0f62a6" />
                <path d="M6 2.5H12V10.5H9V8.2H6.5L6 6.2H8V5H6z" fill="#1a9ce2" />
              </g>
            )}
            <circle cx="17.5" cy="9" r="4.5" fill="#14b14b" stroke="none" />
            <path d="M17.5 6V12M14.5 9H20.5" stroke="#fff" strokeWidth="1.4" />
          </Ic>
        ))}
        <Ic w={5} h={8} c="none" className="ml-[300px]">
          <path d="M5 0V8L0.5 4z" fill="#a3a3a3" />
        </Ic>
        <Ic w={5} h={8} c="none" className="ml-[20px]">
          <path d="M0 0V8L4.5 4z" fill="#a3a3a3" />
        </Ic>
        <div className="ml-[17px] h-[1.5px] w-[10px] bg-[#333]" />
        <div className="ml-[8px] flex h-[12px] w-[214px] items-center">
          <div className="h-px w-[102px] bg-[#d0d0d2]" />
          <div className="h-[12px] w-[4px] rounded-sm bg-[#333]" />
          <div className="h-px flex-1 bg-[#d0d0d2]" />
        </div>
        <Ic w={11} h={11} c="#333" sw={1.3} className="ml-[13px]">
          <path d="M5.5 0.5V10.5M0.5 5.5H10.5" />
        </Ic>
        <div className="ml-[15px] text-[#222]">
          <T s="100%" />
        </div>
      </div>
    </div>
  );
}

/* ---------- right side ---------- */
function IconStrip() {
  return (
    <div className="flex w-[40px] shrink-0 flex-col items-center bg-[#e6e6e6] pt-[8px]">
      <Ic w={6} h={9} c="none">
        <path d="M0.5 0V9L5.5 4.5z" fill="#9b9b9b" />
      </Ic>
      <Ic className="mt-[18px]" c="#666a70" sw={1.5}>
        <path d="M1 0.8H16M1.5 0V16M0 11.5H16M11.3 0V11.5M11.3 6H16M6.3 11.5V16M11.3 11.5V16" />
      </Ic>
      <div className="mt-[10px] flex h-[28px] w-[32px] shrink-0 items-center justify-center bg-[#f4f4f6]">
        <Ic c="none">
          <path d="M0 0H4.5V4.5H0zM5.8 0H10.3V4.5H5.8zM11.5 0H16V4.5H11.5zM0 5.8H4.5V10.3H0zM0 11.5H4.5V16H0z" fill="#419bf9" />
          <circle cx="11" cy="11" r="5" fill="#419bf9" />
          <path d="M11.2 7.5V9M9.8 10H11.3V13.3M9.6 13.5H12.8" stroke="#fff" strokeWidth="1.3" />
        </Ic>
      </div>
      <Ic className="mt-[10px]" c="#666a70" sw={1.6}>
        <path d="M2.5 0V16M13.5 0V16M0 2H16M0 14H16" />
      </Ic>
      <Ic h={13} className="mt-[18px]" c="#666a70" sw={1.6}>
        <path d="M0.8 0.8H15.2V12H0.8z" />
        <path d="M8 4.8H13L10.5 8z" fill="#666a70" stroke="none" />
      </Ic>
      <Ic w={18} h={14} className="mt-[18px]" c="#666a70" sw={1.5}>
        <path d="M3 2.5H0.8V12H3" strokeWidth="1.1" />
        <path d="M5 1H17.3V5H5zM5 8.5H14V12.5H5z" />
      </Ic>
      <Ic className="mt-[16px]" c="#666a70" sw={1.8}>
        <rect x="-4" y="-2.6" width="8" height="5.2" rx="2.6" transform="translate(4.6 4.6) rotate(45)" />
        <rect x="-4" y="-2.6" width="8" height="5.2" rx="2.6" transform="translate(11.4 11.4) rotate(45)" />
        <path d="M5.8 5.8L10.2 10.2" />
      </Ic>
    </div>
  );
}

const Ban = () => (
  <Ic w={16} h={16} c="#444" sw={1.8}>
    <circle cx="8" cy="8" r="7" />
    <path d="M13 3L3 13" />
  </Ic>
);

function GridIcon({ line, fill, horizontal }: { line: string; fill: string; horizontal?: boolean }) {
  return (
    <Ic w={16} h={16} c={line} sw={1}>
      {horizontal ? <rect x="0.5" y="5.5" width="15" height="5" fill={fill} stroke="none" /> : <rect x="5.5" y="0.5" width="5" height="15" fill={fill} stroke="none" />}
      <path d="M0.5 0.5H15.5V15.5H0.5zM5.5 0.5V15.5M10.5 0.5V15.5M0.5 5.5H15.5M0.5 10.5H15.5" />
    </Ic>
  );
}

function SortIcon({ top, bottom, arrow, flip }: { top: string; bottom: string; arrow: string; flip?: boolean }) {
  const a = flip ? "M0.5 14V9.5H5.5V14M0.5 12H5.5" : "M0.5 6V1H5.5V6M0.5 4H5.5";
  const z = flip ? "M0.5 1H5.5L0.5 6H5.5" : "M0.5 9H5.5L0.5 14H5.5";
  return (
    <Ic w={15} h={15} c="none" sw={1.1}>
      <path d={a} stroke={flip ? bottom : top} />
      <path d={z} stroke={flip ? top : bottom} />
      <path d="M10 0.5V12M12.5 0.5V12M8 10L11.2 13.8L14.5 10" stroke={arrow} />
    </Ic>
  );
}

function Select() {
  return (
    <div className="flex h-[20px] w-[156px] border border-[#d9dadd] bg-white leading-[18px]">
      <div className="flex-1 pl-[5px]">
        <T s="默认" />
      </div>
      <div className="flex w-[20px] items-center justify-center bg-[#d9dadd]">
        <Chevron />
      </div>
    </div>
  );
}

function Segments({ items, w }: { items: React.ReactNode[]; w: string }) {
  return (
    <div className={"flex h-[22px] border border-r-0 border-[#d9dadd] bg-white " + w}>
      {items.map((it, i) => (
        <div key={i} className={"flex w-[51px] items-center justify-center " + (i === 1 ? "bg-[#419bf9]" : "")}>
          {it}
        </div>
      ))}
    </div>
  );
}

const Section = ({ name, faint }: { name: string; faint?: boolean }) => (
  <div className={"mx-[5px] flex w-[229px] shrink-0 items-center justify-between bg-[#ececed] pl-[4px] pr-[5px] " + (faint ? "h-[24px]" : "h-[22px]")}>
    <div className="pt-[3px]">
      <T s={name} />
    </div>
    <Ic w={9} h={5} c="none">
      <path d="M0 0H9L4.5 4.8z" fill={faint ? "#c4c4c6" : "#a9a9ab"} />
    </Ic>
  </div>
);

const Tick = ({ s }: { s: string }) => (
  <div className="flex h-[25px] items-center pl-[10px]">
    <div className="flex h-[13px] w-[13px] items-center justify-center bg-[#2f8bef]">
      <Ic w={11} h={10} c="#fff" sw={1.9}>
        <path d="M1.2 5L4.2 8L9.8 1.2" />
      </Ic>
    </div>
    <div className="ml-[3px] pt-px">
      <T s={s} />
    </div>
  </div>
);

function Properties() {
  return (
    <div className="relative flex flex-1 flex-col bg-[#f4f4f6]">
      <div className="flex h-[27px] shrink-0 items-center justify-between border-b border-[#d9dadd] pl-[9px] pr-[6px] pt-px">
        <T s="单元格属性" />
        <Ic w={11} h={11} c="#419bf9" sw={1.6} className="mb-[5px]">
          <path d="M10.5 0.5L1.5 9.5M1 4V10H7" />
        </Ic>
      </div>
      <div className="flex h-[25px] shrink-0 text-center leading-[25px]">
        {["扩展", "样式", "形态", "其他"].map((t, i) => (
          <div key={t} className={i === 0 ? "w-[62px] bg-[#f1f1f3]" : "w-[61px] bg-[#d9dadd] pr-[2px]"}>
            <T s={t} />
          </div>
        ))}
      </div>
      <div className="h-[10px] shrink-0" />
      <Section name="基本" faint />
      <div className="flex h-[32px] shrink-0 pl-[9px] pt-[10px]">
        <div className="w-[69px] leading-[16px]">
          <T s="扩展方向" />
        </div>
        <Segments
          w="w-[156px]"
          items={[<Ban />, <GridIcon line="#fff" fill="#5cc8fb" />, <GridIcon line="#000" fill="#2f7db5" horizontal />]}
        />
      </div>
      <div className="flex h-[34px] shrink-0 pl-[9px] pt-[10px]">
        <div className="w-[69px] leading-[16px]">
          <T s="左父格" />
        </div>
        <Select />
      </div>
      <div className="flex h-[44px] shrink-0 pl-[9px] pt-[10px]">
        <div className="w-[69px] leading-[16px]">
          <T s="上父格" />
        </div>
        <Select />
      </div>
      <Section name="高级" />
      <div className="pt-[7px]">
        <Tick s="横向可伸展" />
        <Tick s="纵向可伸展" />
      </div>
      <div className="flex shrink-0 pl-[10px] pt-[5px]">
        <div className="w-[72px] leading-[16px]">
          <T s="扩展后排序" />
        </div>
        <div className="flex flex-col gap-[4px]">
          <Segments
            w="w-[152px]"
            items={[
              <Ban />,
              <SortIcon top="#fff" bottom="#fff" arrow="#fff" />,
              <SortIcon top="#ff0000" bottom="#1e6fa8" arrow="#000" flip />,
            ]}
          />
          <div className="flex gap-[5px]">
            <div className={"flex h-[20px] w-[123px] items-center border border-[#d9dadd] bg-white pl-[3px] text-[12px] " + SANS}>
              =if($a==1,F4,-F4)
            </div>
            <div className="flex h-[20px] w-[24px] items-center justify-center border border-[#d9dadd] bg-white">
              <Fx />
            </div>
          </div>
        </div>
      </div>
      <div className="absolute -left-[6px] top-[73px] h-[119px] w-[252px] border-[3px] border-[#f93c3a]" />
      <div className="absolute left-[4px] top-[218px] h-[136px] w-[237px] border-[3px] border-[#f93c3a]" />
    </div>
  );
}

/* ---------- taskbar and input method bar ---------- */
const TASKS = ["#3a7a78", "#2a72d8", "#777777", "#e04a3a", "#4a9a3c", "#4a3566", "#f2f2f2", "#444444", "#3a98b8", "#22a0e0", "#e8c95a"];
function Taskbar() {
  return (
    <div className="relative flex h-[8px] shrink-0 overflow-hidden border-t-2 border-[#0a1a30] bg-[linear-gradient(90deg,#17497f_0%,#3a86c6_50%,#2f80c4_60%,#7ab4e0_66.5%,#1f5c96_69%,#164a82_85%,#14335c_98%)] pl-[61px]">
      <div className="absolute left-[14px] top-[1px] h-[30px] w-[30px] rounded-full bg-[#9db9d3]" />
      <div className="flex gap-[4px]">
        {TASKS.map((c, i) => (
          <div key={i} className="flex h-[10px] w-[58px] justify-center overflow-hidden rounded-t-sm border border-[#cfe8f8] bg-[linear-gradient(90deg,#6fb2dd,#b6dcf2)]">
            <div className={i % 3 === 2 ? "mt-[2px] h-5 w-[30px]" : "mt-[1px] h-5 w-[22px] rounded-full"} style={{ backgroundColor: c }} />
          </div>
        ))}
      </div>
      <div className={"absolute left-[1298px] top-[3px] text-[11px] leading-[12px] text-white " + SANS}>20:28</div>
      <div className="absolute right-0 top-0 h-[8px] w-[15px] border-l border-[#0e2444] bg-[#8296ad]" />
    </div>
  );
}

function ImeBar() {
  const b = "#2277cc";
  return (
    <div className="absolute left-[14px] top-[705px] flex h-[23px] w-[193px] items-center border border-b-0 border-[#9aa3ad] bg-white pl-[19px]">
      <svg width="30" height="30" viewBox="0 0 30 30" className="absolute -left-[15px] -top-[5px]">
        <rect x="2" y="3" width="24" height="24" rx="3" fill="#f1511b" transform="rotate(-10 14 15)" />
        <path d="M21 8.5C15 6 7 8 8 12C9 15.5 20 13.5 20.5 17.5C21 22 12 23 6.5 20.5" stroke="#fff" strokeWidth="3.4" fill="none" />
      </svg>
      <span className="w-[23px] font-['Noto_Sans_CJK_SC',sans-serif] text-[15px] font-bold leading-[22px] text-[#2277cc]">英</span>
      <Ic w={12} h={16} c="none">
        <circle cx="3" cy="6" r="1.8" fill={b} />
        <path d="M8 9.5C10.5 9 10.5 12 7.5 13.5" stroke={b} strokeWidth="1.6" />
      </Ic>
      <Ic w={16} h={16} c={b} className="ml-[8px]" sw={1.8}>
        <circle cx="8" cy="8" r="7" />
        <path d="M4.3 9.5C5.5 13 10.5 13 11.7 9.5M5.5 4.5V7M10.5 4.5V7" strokeWidth="1.5" />
      </Ic>
      <Ic w={14} h={16} c={b} className="ml-[7px]" sw={1.6}>
        <rect x="4" y="0" width="6" height="10" rx="3" fill={b} stroke="none" />
        <path d="M1.5 6.5C1.5 13.5 12.5 13.5 12.5 6.5M7 12V15M4 15.2H10" />
      </Ic>
      <Ic w={16} h={13} c={b} className="ml-[7px]" sw={1.6}>
        <rect x="0.8" y="0.8" width="14.4" height="11" />
        <path d="M3 4H13M3 6.5H13" strokeDasharray="1.6 1" />
        <path d="M4.5 9.2H11.5" />
      </Ic>
      <Ic w={16} h={16} c="none" className="ml-[8px]">
        <circle cx="7" cy="3.8" r="3.2" fill="#aebdd0" />
        <path d="M1 14C1 6.5 13 6.5 13 10V14z" fill="#aebdd0" />
        <path d="M7 9.5H16V15.5H7z" fill="#fff" />
        <path d="M7.5 10.5H10.5M9 10.5V15M12 10.5H15V15H12z" stroke="#aebdd0" />
      </Ic>
      <Ic w={14} h={14} c="none" className="ml-[6px]">
        <path d="M0 2.5L4 0.5C5.5 2.5 8.5 2.5 10 0.5L14 2.5L12.8 6.5L11 6V13.5H3V6L1.2 6.5z" fill={b} />
      </Ic>
      <Ic w={14} h={14} c="none" className="ml-[7px]">
        <path d="M0 0H6V6H0zM0 7.5H6V13.5H0zM7.5 7.5H13.5V13.5H7.5z" fill={b} />
        <path d="M8.4 0.9H12.6V5.1H8.4z" stroke={b} strokeWidth="1.5" />
      </Ic>
    </div>
  );
}

export default function App() {
  return (
    <div className="relative flex h-[736px] w-[1366px] flex-col overflow-hidden bg-[#f4f4f6] font-['Noto_Sans_CJK_SC',sans-serif] text-[12px] leading-[18px] text-black">
      <TitleBar />
      <MenuBar />
      <div className="flex h-[682px] shrink-0">
        <LeftColumn />
        <div className="flex w-[10px] shrink-0 flex-col items-center bg-[#e6e6e6] pt-[7px]">
          <Ic w={6} h={9} c="none">
            <path d="M5.5 0V9L0.5 4.5z" fill="#9b9b9b" />
          </Ic>
          <div className="mt-[327px] h-[6px] w-[4px] border-x border-[#aaa]" />
        </div>
        <Center />
        <IconStrip />
        <Properties />
      </div>
      <Taskbar />
      <ImeBar />
    </div>
  );
}
